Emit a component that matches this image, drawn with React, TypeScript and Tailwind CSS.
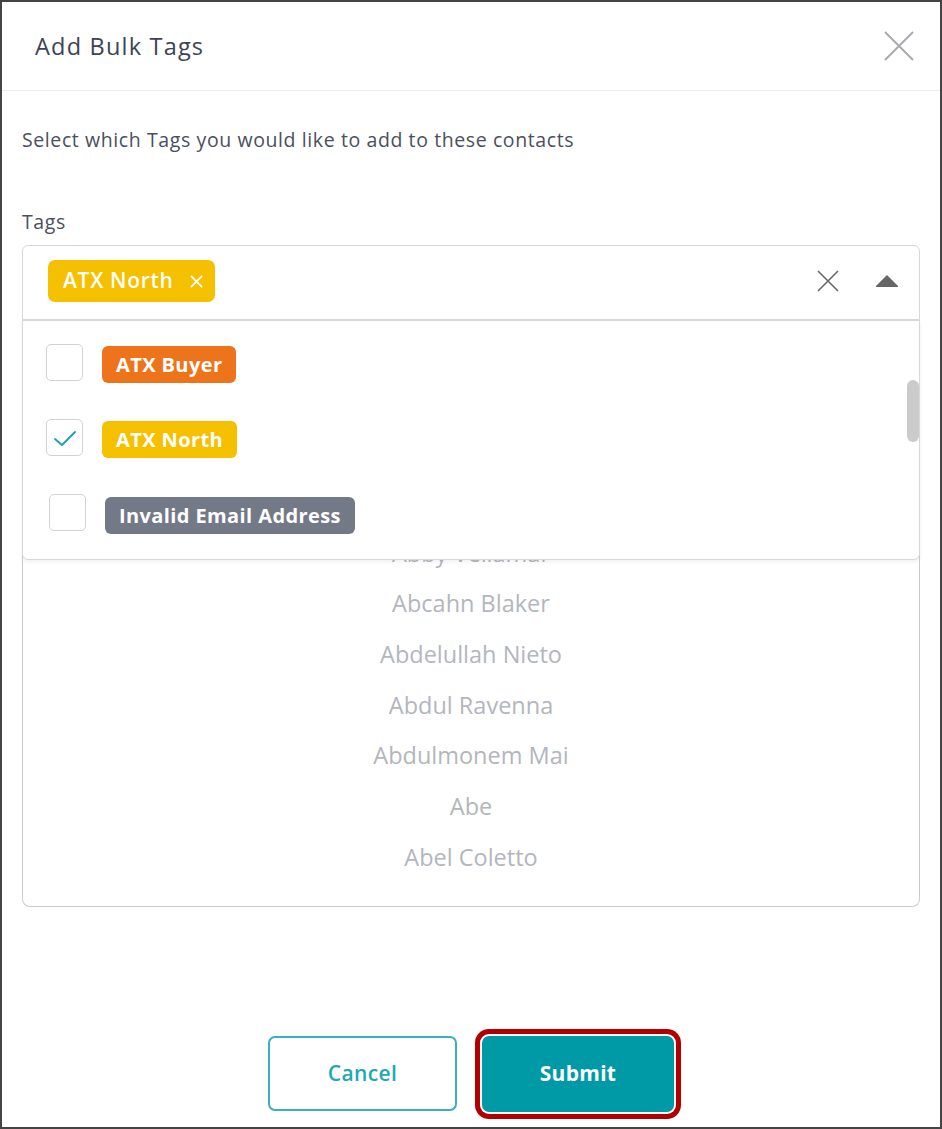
import React from "react";

const names = [
  "Abby Vellamar",
  "Abcahn Blaker",
  "Abdelullah Nieto",
  "Abdul Ravenna",
  "Abdulmonem Mai",
  "Abe",
  "Abel Coletto",
];

function Check({ checked }: { checked?: boolean }) {
  return (
    <div className="w-[37px] h-[37px] shrink-0 rounded-[5px] border border-[#cfd3d8] bg-white flex items-center justify-center">
      {checked && (
        <svg width="26" height="20" viewBox="0 0 26 20" fill="none">
          <path d="M3 11 L10 17 L23 4" stroke="#1a9fad" strokeWidth="1.8" strokeLinecap="round" strokeLinejoin="round" />
        </svg>
      )}
    </div>
  );
}

function Tag({ label, color }: { label: string; color: string }) {
  return (
    <span className={`h-[37px] px-[14px] rounded-[6px] flex items-center text-white text-[20px] tracking-[0.4px] font-bold ${color}`}>
      {label}
    </span>
  );
}

export default function App() {
  return (
    <div
      className="w-[942px] h-[1129px] border-2 border-[#444] bg-white flex flex-col"
      style={{ fontFamily: "'Open Sans', 'Noto Sans', sans-serif" }}
    >
      <div className="h-[89px] shrink-0 border-b border-[#ececec] flex items-center justify-between pl-[33px] pr-[26px]">
        <h1 className="text-[23.5px] text-[#3d4355] tracking-[1.2px] pt-[1px]">Add Bulk Tags</h1>
        <svg width="30" height="30" viewBox="0 0 30 30">
          <path d="M1 1 L29 29 M29 1 L1 29" stroke="#a9abaf" strokeWidth="2" />
        </svg>
      </div>

      <div className="px-[20px] flex flex-col flex-1">
        <p className="mt-[37px] text-[19.5px] text-[#4a4f5e] leading-[24px] tracking-[0.6px]">
          Select which Tags you would like to add to these contacts
        </p>
        <p className="mt-[58px] text-[19.5px] text-[#4a4f5e] leading-[24px] tracking-[0.6px]">Tags</p>

        <div className="relative mt-[11px]">
          <div className="h-[75px] border border-[#d5d8dc] rounded-t-[6px] flex items-center pl-[25px] pr-[19px]">
            <span className="h-[42px] mb-[3px] rounded-[7px] bg-[#f5c000] flex items-center pl-[15px] pr-[11px] gap-[15px] text-white text-[21px] tracking-[0.7px] font-semibold">
              ATX North
              <svg width="15" height="15" viewBox="0 0 16 16">
                <path d="M2 2 L14 14 M14 2 L2 14" stroke="white" strokeWidth="1.8" />
              </svg>
            </span>
            <div className="flex-1" />
            <svg className="mb-[3px]" width="24" height="24" viewBox="0 0 24 24">
              <path d="M2 2 L22 22 M22 2 L2 22" stroke="#666" strokeWidth="1.6" />
            </svg>
            <svg className="ml-[34px] mb-[3px]" width="26" height="16" viewBox="0 0 26 16">
              <path d="M13 2 L24 13 Q24.5 14 23.5 14 L2.5 14 Q1.5 14 2 13 Z" fill="#666" />
            </svg>
          </div>

          <div className="h-[587px] border border-t-0 border-[#c9ccd1] rounded-b-[8px] overflow-hidden flex flex-col items-center pt-[208px]">
            {names.map((n) => (
              <div key={n} className="h-[50.7px] shrink-0 flex items-center text-[23.5px] text-[#b3b6bd]">
                {n}
              </div>
            ))}
          </div>

          <div className="absolute left-0 right-0 top-[75px] h-[240px] bg-white border border-[#d5d8dc] rounded-b-[6px] shadow-[0_2px_4px_rgba(0,0,0,0.06)]">
            <div className="absolute right-0 top-[59px] w-[12px] h-[62px] rounded-full bg-[#cbcbcb]" />
            <div className="flex flex-col pl-[23px] pt-[23px]">
              <div className="flex items-center gap-[19px] h-[37px]">
                <Check />
                <div className="mt-[4px]"><Tag label="ATX Buyer" color="bg-[#ed741a]" /></div>
              </div>
              <div className="flex items-center gap-[19px] h-[37px] mt-[38px]">
                <Check checked />
                <div className="mt-[4px]"><Tag label="ATX North" color="bg-[#f5c000]" /></div>
              </div>
              <div className="flex items-center gap-[19px] h-[37px] mt-[38px] pl-[3px]">
                <Check />
                <div className="mt-[6px]"><Tag label="Invalid Email Address" color="bg-[#737986]" /></div>
              </div>
            </div>
          </div>
        </div>

        <div className="flex-1" />

        <div className="flex justify-center gap-[25px] pb-[15px]">
          <button className="w-[189px] h-[75px] rounded-[7px] border-2 border-[#3bb0bd] bg-white text-[#22a7b4] text-[21px] tracking-[0.4px] font-semibold">
            Cancel
          </button>
          <button className="w-[192px] h-[76px] rounded-[7px] bg-[#0099a6] text-white text-[21px] tracking-[0.3px] font-bold shadow-[0_0_0_2px_#ffffff,0_0_0_7px_#b20000]">
            Submit
          </button>
        </div>
      </div>
    </div>
  );
}
